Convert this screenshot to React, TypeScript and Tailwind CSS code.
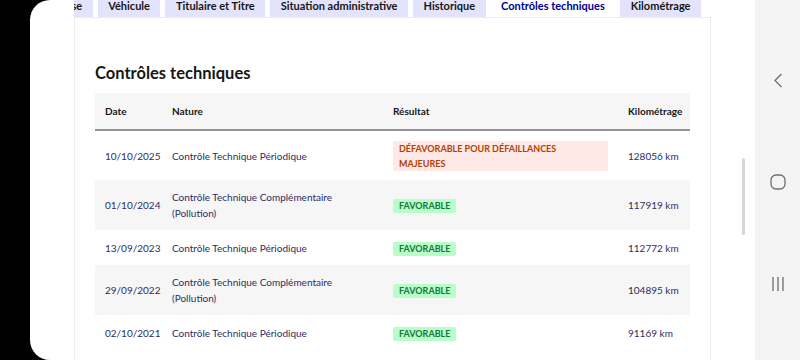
const tabs = [
  "Synthèse",
  "Véhicule",
  "Titulaire et Titre",
  "Situation administrative",
  "Historique",
  "Contrôles techniques",
  "Kilométrage",
];

type Row = {
  date: string;
  nature: string[];
  ok: boolean;
  km: string;
};

const rows: Row[] = [
  { date: "10/10/2025", nature: ["Contrôle Technique Périodique"], ok: false, km: "128056 km" },
  { date: "01/10/2024", nature: ["Contrôle Technique Complémentaire", "(Pollution)"], ok: true, km: "117919 km" },
  { date: "13/09/2023", nature: ["Contrôle Technique Périodique"], ok: true, km: "112772 km" },
  { date: "29/09/2022", nature: ["Contrôle Technique Complémentaire", "(Pollution)"], ok: true, km: "104895 km" },
  { date: "02/10/2021", nature: ["Contrôle Technique Périodique"], ok: true, km: "91169 km" },
];

function Tabs() {
  return (
    <div className="flex h-[17px] justify-end gap-[5px] overflow-hidden pr-[10px]">
      {tabs.map((t) => {
        const active = t === "Contrôles techniques";
        return (
          <div
            key={t}
            className={
              active
                ? "shrink-0 bg-white px-[10.5px] text-[11px] font-bold leading-[12px] whitespace-nowrap text-[#000091]"
                : "shrink-0 bg-[#e3e3fd] px-[10.5px] text-[11px] font-bold leading-[12px] whitespace-nowrap text-[#161616]"
            }
          >
            {t}
          </div>
        );
      })}
    </div>
  );
}

function Badge({ ok }: { ok: boolean }) {
  if (ok) {
    return (
      <span className="inline-block rounded-[2px] bg-[#b8fec9] px-[6px] text-[9px] font-bold leading-[14px] text-[#18753c]">
        FAVORABLE
      </span>
    );
  }
  return (
    <span className="block rounded-[2px] bg-[#ffe9e6] px-[6px] text-[9px] font-bold leading-[15px] text-[#b34000]">
      DÉFAVORABLE POUR DÉFAILLANCES
      <br />
      MAJEURES
    </span>
  );
}

export default function App() {
  return (
    <div className="flex h-[360px] w-[800px] overflow-hidden bg-black font-['Lato',sans-serif]">
      <div className="w-[30px] shrink-0" />

      {/* screen */}
      <div className="flex flex-1 overflow-hidden rounded-l-[20px] bg-white">
        <div className="w-[44px] shrink-0" />

        {/* card */}
        <div className="flex w-[637px] shrink-0 flex-col">
          <Tabs />
          <div className="flex-1 border-x border-t border-[#ececec] px-[20px] pt-[43px]">
            <h2 className="mb-[8px] text-[16.5px] font-bold leading-[24px] text-[#161616]">
              Contrôles techniques
            </h2>
            <table className="w-[595px] table-fixed border-collapse text-left">
              <colgroup>
                <col className="w-[67px]" />
                <col className="w-[221px]" />
                <col className="w-[235px]" />
                <col className="w-[72px]" />
              </colgroup>
              <thead>
                <tr className="h-[37px] bg-[#f6f6f6] text-[10px] font-bold text-[#161616]">
                  <th className="border-b-2 border-[#929292] pl-[10px]">Date</th>
                  <th className="border-b-2 border-[#929292] pl-[10px]">Nature</th>
                  <th className="border-b-2 border-[#929292] pl-[10px]">Résultat</th>
                  <th className="border-b-2 border-[#929292] pl-[10px]">Kilométrage</th>
                </tr>
              </thead>
              <tbody className="text-[10px] leading-[16px] text-[#2d2d5e]">
                {rows.map((r, i) => (
                  <tr
                    key={r.date}
                    className={
                      (r.nature.length > 1 || !r.ok ? "h-[50px] " : "h-[35px] ") +
                      (i % 2 === 1 ? "bg-[#f6f6f6]" : "bg-white")
                    }
                  >
                    <td className="pl-[10px]">{r.date}</td>
                    <td className="pl-[10px]">
                      {r.nature.map((n) => (
                        <div key={n}>{n}</div>
                      ))}
                    </td>
                    <td className="pr-[10px] pl-[10px]">
                      <Badge ok={r.ok} />
                    </td>
                    <td className="pl-[10px]">{r.km}</td>
                  </tr>
                ))}
              </tbody>
            </table>
          </div>
        </div>

        {/* scrollbar */}
        <div className="flex flex-1 justify-end pt-[158px] pr-[10px]">
          <div className="h-[77px] w-[3px] rounded-full bg-[#d6d6d6]" />
        </div>
      </div>

      {/* android nav bar */}
      <div className="flex w-[45px] shrink-0 flex-col items-center bg-[#f4f4f4] pt-[73px]">
        <svg width="10" height="15" viewBox="0 0 10 15" fill="none">
          <path d="M8.5 1 L2 7.5 L8.5 14" stroke="#6e6e6e" strokeWidth="1.3" />
        </svg>
        <svg className="mt-[86px]" width="16" height="16" viewBox="0 0 16 16" fill="none">
          <rect x="1" y="1" width="14" height="14" rx="5" stroke="#6e6e6e" strokeWidth="1.3" />
        </svg>
        <svg className="mt-[86px]" width="16" height="16" viewBox="0 0 16 16" fill="none">
          <path d="M3 1v14M8 1v14M13 1v14" stroke="#6e6e6e" strokeWidth="1.3" />
        </svg>
      </div>
    </div>
  );
}
